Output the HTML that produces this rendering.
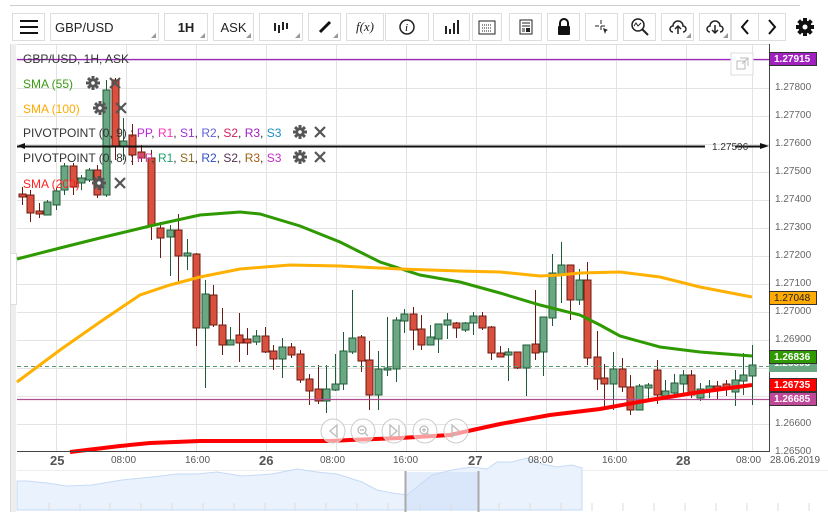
<!DOCTYPE html>
<html><head><meta charset="utf-8"><style>
*{margin:0;padding:0;box-sizing:border-box}
body{width:828px;height:517px;background:#fff;font-family:"Liberation Sans",sans-serif;position:relative;overflow:hidden}
.b{position:absolute;top:13px;height:28px;border:1px solid #ddd;background:#fff;font-size:13px;color:#222;display:flex;align-items:center;justify-content:center}
.b .tri{position:absolute;right:2px;bottom:2px;width:0;height:0;border-left:5px solid transparent;border-bottom:5px solid #999}
.t{position:absolute;font-size:12px;white-space:nowrap}
.ax{position:absolute;font-size:10px;color:#666;left:775px}
.tl{position:absolute;top:455px;font-size:10px;color:#555}
.td{position:absolute;top:453px;font-size:13px;font-weight:bold;color:#555}
.lab{position:absolute;left:769px;width:48px;height:14px;font-size:10px;font-weight:bold;color:#fff;padding-left:4px;line-height:13px;border:1px solid #333}
</style></head><body>
<div style="position:absolute;left:10px;top:5px;width:790px;height:1px;background:#ccc"></div>
<div class="b" style="left:12px;width:33px"><svg width="18" height="14"><path d="M0 1h18M0 7h18M0 13h18" stroke="#111" stroke-width="2"/></svg></div>
<div class="b" style="left:50px;width:109px;justify-content:flex-start;padding-left:4px">GBP/USD<span class="tri"></span></div>
<div class="b" style="left:164px;width:44px;font-weight:bold">1H<span class="tri"></span></div>
<div class="b" style="left:213px;width:41px">ASK<span class="tri"></span></div>
<div class="b" style="left:259px;width:44px"><svg width="16" height="12"><path d="M2 2v8M6 4v8M10 1v8M14 2v6" stroke="#222" stroke-width="2"/></svg><span class="tri"></span></div>
<div class="b" style="left:308px;width:33px"><svg width="14" height="14"><path d="M2 12L12 2" stroke="#111" stroke-width="3"/></svg><span class="tri"></span></div>
<div class="b" style="left:346px;width:38px;font-family:'Liberation Serif',serif;font-style:italic">f(x)</div>
<div class="b" style="left:385px;width:44px"><svg width="16" height="16"><circle cx="8" cy="8" r="7" stroke="#222" fill="none" stroke-width="1.5"/><text x="6" y="12" font-size="11" font-style="italic" font-family="Liberation Serif">i</text></svg></div>
<div class="b" style="left:433px;width:37px"><svg width="16" height="14"><path d="M2 6v8M6 9v5M10 3v11M14 0v14" stroke="#222" stroke-width="2"/></svg></div>
<div class="b" style="left:472px;width:30px"><svg width="18" height="16"><rect x="1" y="2" width="16" height="13" stroke="#222" fill="none"/><path d="M4 6h10M4 9h10M4 12h10" stroke="#222" stroke-dasharray="1 1"/></svg></div>
<div class="b" style="left:509px;width:33px"><svg width="14" height="16"><rect x="1" y="1" width="12" height="14" stroke="#222" fill="none"/><path d="M3 4h8M3 7h8M3 10h3M3 12h3" stroke="#222"/><rect x="7" y="9" width="4" height="4" fill="#222"/></svg></div>
<div class="b" style="left:547px;width:33px"><svg width="14" height="18"><path d="M3 8V5a4 4 0 0 1 8 0v3" stroke="#111" stroke-width="2" fill="none"/><rect x="1" y="8" width="12" height="9" rx="1" fill="#111"/></svg></div>
<div class="b" style="left:585px;width:33px"><svg width="16" height="16"><path d="M7 1v12M1 7h12" stroke="#222" stroke-dasharray="4 2"/><path d="M9 9l5 2-2 1-1 3z" fill="#222"/></svg></div>
<div class="b" style="left:623px;width:33px"><svg width="18" height="18"><circle cx="7" cy="7" r="6" stroke="#222" fill="none" stroke-width="1.5"/><path d="M11 11l6 6" stroke="#222" stroke-width="2"/><path d="M3 8l2-3 2 3 3-3" stroke="#222" fill="none"/></svg></div>
<div class="b" style="left:661px;width:33px"><svg width="18" height="16"><path d="M4 13a3 3 0 0 1 0-6a5 5 0 0 1 10 0a3 3 0 0 1 0 6" stroke="#222" fill="none" stroke-width="1.5"/><path d="M9 15V7M6 10l3-3 3 3" stroke="#222" fill="none" stroke-width="1.5"/></svg><span class="tri"></span></div>
<div class="b" style="left:699px;width:32px"><svg width="18" height="16"><path d="M4 13a3 3 0 0 1 0-6a5 5 0 0 1 10 0a3 3 0 0 1 0 6" stroke="#222" fill="none" stroke-width="1.5"/><path d="M9 6v8M6 11l3 3 3-3" stroke="#222" fill="none" stroke-width="1.5"/></svg><span class="tri"></span></div>
<div class="b" style="left:731px;width:28px"><svg width="10" height="16"><path d="M8 1L2 8l6 7" stroke="#111" fill="none" stroke-width="2"/></svg></div>
<div class="b" style="left:758px;width:28px"><svg width="10" height="16"><path d="M2 1l6 7-6 7" stroke="#111" fill="none" stroke-width="2"/></svg></div>
<div style="position:absolute;left:795px;top:17px"><svg width="20" height="20" viewBox="0 0 20 20"><g fill="#111"><circle cx="10" cy="10" r="6.5"/><rect x="8" y="1" width="4" height="18"/><rect x="1" y="8" width="18" height="4"/><rect x="8" y="1" width="4" height="18" transform="rotate(45 10 10)"/><rect x="8" y="1" width="4" height="18" transform="rotate(-45 10 10)"/></g><circle cx="10" cy="10" r="2.5" fill="#fff"/></svg></div>
<div style="position:absolute;left:10px;top:44px;width:6px;height:468px;background:#eee;border-left:1px solid #ddd"></div>
<div style="position:absolute;left:10px;top:253px;width:7px;height:52px;background:#fff;border:1px solid #ddd"></div>
<svg width="828" height="517" style="position:absolute;left:0;top:0" id="s">
<g stroke="#e3e3e3" stroke-width="1">
<path d="M17 60.5H769M17 88.5H769M17 116.5H769M17 144.5H769M17 172.5H769M17 200.5H769M17 228.5H769M17 256.5H769M17 284.5H769M17 312.5H769M17 340.5H769M17 368.5H769M17 396.5H769M17 424.5H769"/>
<path d="M56.5 44V451M126.5 44V451M196.5 44V451M266.5 44V451M336.5 44V451M406.5 44V451M476.5 44V451M546.5 44V451M616.5 44V451M686.5 44V451M752.5 44V451"/>
</g>
<path d="M17 44.5H769" stroke="#ddd"/>
<g id="c"></g>
<path d="M17 59.5H769" stroke="#a020c0" stroke-width="1.2"/>
<path d="M17 366.5H769" stroke="#5a9a70" stroke-dasharray="4 3"/>
<path d="M17 399.5H769" stroke="#b05090" stroke-width="1.2"/>
<path d="M17 146.5H705M735 146.5H760" stroke="#111" stroke-width="2"/>
<path d="M17 146l8-3v6zM769 146l-9-3v6z" fill="#111"/>
<text x="712" y="150" font-size="10" fill="#333" font-family="Liberation Sans">1.27596</text>
<polyline fill="none" stroke="#2f9a00" stroke-width="3" points="17,259 60,248 100,238 150,226 200,215 240,212 260,214 300,226 340,242 380,262 420,275 460,282 500,293 540,305 580,315 600,325 620,336 660,347 700,352 752,356"/>
<polyline fill="none" stroke="#ffb000" stroke-width="3" points="17,382 60,350 100,322 140,295 170,285 200,277 240,269 290,265 340,266 400,269 460,271 500,272 540,276 560,275 580,273 620,272 660,277 700,287 752,297"/>
<polyline fill="none" stroke="#ff0000" stroke-width="4" points="70,452 120,446 150,443 200,441 330,441 350,440 400,438 450,435 500,424 550,415 600,409 650,400 700,392 752,385"/>
<path d="M769.5 44V452M17 451.5H769" stroke="#444"/>
<rect x="731" y="53" width="22" height="22" fill="#fff" stroke="#ddd"/>
<path d="M737 61h8v8h-8zM740 58h8v8M742 64l6-6" stroke="#bbb" fill="none"/>
<g fill="#fff" fill-opacity=".6" stroke="#ccc"><circle cx="333" cy="431" r="12"/><circle cx="363" cy="431" r="12"/><circle cx="394" cy="431" r="12"/><circle cx="425" cy="431" r="12"/><circle cx="456" cy="431" r="12"/></g>
<g stroke="#bbb" fill="none" stroke-width="1.3"><path d="M337 425l-7 6 7 6z"/><circle cx="362" cy="430" r="4"/><path d="M365 433l3 3M360 430h4"/><path d="M390 425l7 6-7 6zM399 425v12"/><circle cx="424" cy="430" r="4"/><path d="M427 433l3 3M422 430h4M424 428v4"/><path d="M452 425l7 6-7 6z"/></g>
<path d="M17 470.5H828" stroke="#eee"/>
<path d="M17 510V481l10 0 20 2 20 3 25-1 30-5 30-3 25-3 20 0 20-2 25 4 30-2 25-5 20 3 20 2 25 8 15 8 15 3 15 2 10-8 15-12 20-5 20-3 15 2 10-7 15 0 15-4 15 6 15 3 15-2 10 3V510z" fill="#eaf2fd" stroke="#c7daf5"/>
<rect x="405" y="472" width="73" height="38" fill="#c9dcf7" fill-opacity=".5"/>
<path d="M405.5 471V512M478.5 471V512" stroke="#aaa" stroke-width="2"/>
<g stroke="#ddd"><path d="M49 503v8M80 503v8M110 503v8M141 503v8M172 503v8M203 503v8M234 503v8M265 503v8M295 503v8M326 503v8M357 503v8M388 503v8M420 503v8M451 503v8M499 503v8M530 503v8M561 503v8M592 503v8M623 503v8M654 503v8M685 503v8M716 503v8M747 503v8M778 503v8M809 503v8"/></g>
</svg>
<div class="t" style="left:23px;top:52px;color:#333">GBP/USD, 1H, ASK</div>
<div class="t" style="left:23px;top:77px;color:#3a9a10">SMA (55)</div>
<div class="t" style="left:23px;top:102px;color:#ffaa00">SMA (100)</div>
<div class="t" style="left:23px;top:126px;color:#333">PIVOTPOINT (0, 9)  : <span style="color:#c020e0">PP</span>, <span style="color:#ff30c0">R1</span>, <span style="color:#a030d0">S1</span>, <span style="color:#6060e0">R2</span>, <span style="color:#d02060">S2</span>, <span style="color:#a020c0">R3</span>, <span style="color:#1890c0">S3</span></div>
<div class="t" style="left:23px;top:151px;color:#333">PIVOTPOINT (0, 8)  : <span style="color:#d040b0">PP</span>, <span style="color:#20a070">R1</span>, <span style="color:#8a6a20">S1</span>, <span style="color:#3050c0">R2</span>, <span style="color:#553355">S2</span>, <span style="color:#a06010">R3</span>, <span style="color:#c030c0">S3</span></div>
<div class="t" style="left:23px;top:177px;color:#ff2020">SMA (200)</div>
<svg width="828" height="517" style="position:absolute;left:0;top:0">
<g id="ic"></g>
</svg>
<div class="ax" style="top:82px">1.27800</div><div class="ax" style="top:110px">1.27700</div><div class="ax" style="top:138px">1.27600</div><div class="ax" style="top:166px">1.27500</div><div class="ax" style="top:194px">1.27400</div><div class="ax" style="top:222px">1.27300</div><div class="ax" style="top:250px">1.27200</div><div class="ax" style="top:278px">1.27100</div><div class="ax" style="top:306px">1.27000</div><div class="ax" style="top:334px">1.26900</div><div class="ax" style="top:418px">1.26600</div><div class="ax" style="top:446px">1.26500</div>
<div class="lab" style="top:52px;background:#a020c0">1.27915</div>
<div class="lab" style="top:291px;background:#ffaa00;color:#222;font-weight:normal">1.27048</div>
<div class="lab" style="top:356px;background:#6aa884;border-color:#6aa884;height:16px">1.26803</div>
<div class="lab" style="top:350px;background:#2f9a00">1.26836</div>
<div class="lab" style="top:378px;background:#ff0000">1.26735</div>
<div class="lab" style="top:392px;background:#c04898">1.26685</div>
<div class="td" style="left:50px">25</div><div class="tl" style="left:111px">08:00</div><div class="tl" style="left:185px">16:00</div>
<div class="td" style="left:259px">26</div><div class="tl" style="left:320px">08:00</div><div class="tl" style="left:393px">16:00</div>
<div class="td" style="left:468px">27</div><div class="tl" style="left:528px">08:00</div><div class="tl" style="left:602px">16:00</div>
<div class="td" style="left:676px">28</div><div class="tl" style="left:736px">08:00</div><div class="tl" style="left:770px">28.06.2019</div>
<script>
var d=[[22,194,197,187,205,0],[30,195,213,190,222,0],[39,211,214,203,218,0],[47,202,215,200,215,1],[56,191,205,188,210,1],[64,166,190,163,195,1],[73,166,187,163,195,0],[81,178,183,175,190,1],[89,170,180,168,182,1],[97,170,195,165,198,0],[106,90,195,80,197,1],[115,80,146,78,160,0],[123,141,147,118,160,1],[132,135,155,124,165,0],[141,152,158,145,162,0],[151,158,226,150,240,0],[160,228,238,222,258,0],[170,230,237,225,276,1],[178,230,256,214,282,0],[187,253,256,239,270,1],[196,254,328,253,346,0],[205,294,328,280,388,1],[213,295,325,285,327,0],[222,325,345,308,355,0],[230,340,345,327,345,1],[239,335,343,313,362,0],[247,339,343,328,355,0],[256,336,342,330,345,1],[265,336,352,327,353,0],[273,351,359,345,370,0],[282,347,359,338,378,1],[291,347,355,343,358,0],[300,354,380,350,383,0],[309,379,391,374,405,0],[318,389,401,365,404,0],[326,389,401,365,413,1],[335,384,390,354,391,1],[343,351,384,332,390,1],[352,338,352,290,354,1],[361,337,361,335,372,0],[369,360,395,341,410,0],[378,369,395,351,410,1],[387,368,370,317,376,1],[396,320,369,317,382,1],[404,314,321,309,333,1],[413,314,330,307,350,0],[421,329,345,315,350,0],[430,337,345,325,345,1],[438,324,339,324,353,1],[447,320,325,313,339,1],[456,323,328,322,338,0],[465,323,330,322,332,1],[473,316,323,312,335,1],[482,316,328,312,330,0],[491,327,353,326,360,0],[500,353,357,346,357,0],[508,352,355,348,381,1],[517,352,368,352,369,0],[526,345,368,345,396,1],[535,344,353,290,360,0],[543,317,352,317,376,1],[552,273,318,254,326,1],[561,265,275,242,303,1],[570,265,300,265,320,0],[579,280,300,269,305,1],[587,280,358,262,365,0],[597,357,379,331,390,0],[604,378,384,364,408,0],[613,369,384,352,410,1],[622,369,387,358,392,0],[630,387,410,375,415,0],[639,386,410,384,410,1],[648,385,388,383,399,1],[657,370,395,360,404,0],[665,391,396,380,400,1],[674,383,393,374,398,1],[683,375,384,370,396,1],[691,375,395,370,398,0],[700,389,398,383,401,1],[709,386,391,380,398,1],[717,386,390,381,400,0],[726,384,388,380,396,0],[735,380,392,370,406,1],[743,375,381,353,395,1],[752,365,376,345,405,1]];
var s="";d.forEach(function(c){var col=c[5]?"#6aa884":"#d9503f",st=c[5]?"#1d5a35":"#6a1a10";s+='<path d="M'+(c[0]+.5)+' '+c[3]+'V'+c[4]+'" stroke="'+st+'"/>';s+='<rect x="'+(c[0]-3)+'" y="'+c[1]+'" width="7" height="'+Math.max(2,c[2]-c[1])+'" fill="'+col+'" stroke="'+st+'"/>';});
document.getElementById("c").innerHTML=s;
var ic="";function gear(x,y){ic+='<g transform="translate('+x+','+y+')" fill="#555"><circle r="4.5"/><rect x="-1.5" y="-7" width="3" height="14"/><rect x="-7" y="-1.5" width="14" height="3"/><rect x="-1.5" y="-7" width="3" height="14" transform="rotate(45)"/><rect x="-1.5" y="-7" width="3" height="14" transform="rotate(-45)"/><circle r="1.8" fill="#fff"/></g>';}
function x(a,b){ic+='<path d="M'+(a-5)+' '+(b-5)+'l10 10M'+(a+5)+' '+(b-5)+'l-10 10" stroke="#555" stroke-width="2.2"/>';}
gear(93,83);x(115,83);gear(100,108);x(121,108);gear(300,132);x(320,132);gear(300,157);x(320,157);gear(99,183);x(120,183);
document.getElementById("ic").innerHTML=ic;
</script>
</body></html>
